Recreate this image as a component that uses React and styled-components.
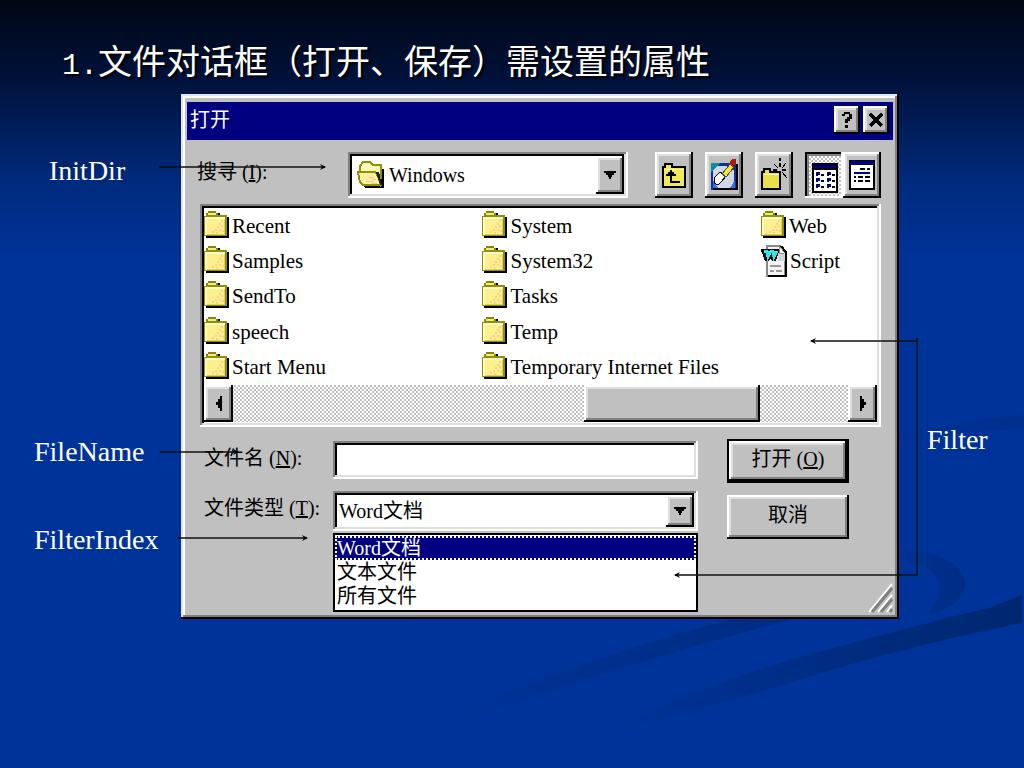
import styled, { createGlobalStyle, css } from "styled-components";

const GlobalStyle = createGlobalStyle`
  * {
    box-sizing: border-box;
  }
  body {
    margin: 0;
    background: #003399;
  }
`;

const uiFont = `"Liberation Serif", "Noto Sans CJK SC", serif`;

const raised = css`
  background: #c0c0c0;
  box-shadow: inset -2px -2px #000, inset 2px 2px #fff, inset -4px -4px #808080,
    inset 4px 4px #dfdfdf;
`;

const sunken = css`
  background: #fff;
  box-shadow: inset -2px -2px #fff, inset 2px 2px #808080,
    inset -4px -4px #dfdfdf, inset 4px 4px #000;
`;

const checker = css`
  background: repeating-conic-gradient(#c0c0c0 0 25%, #fff 0 50%) 0 0 / 4px 4px;
`;

const Slide = styled.main`
  position: relative;
  min-height: 100vh;
  overflow: hidden;
  background: linear-gradient(#000614 0, #00123a 80px, #002a7c 180px, #003399 260px);
`;

const Backdrop = styled.svg`
  position: absolute;
  right: 0;
  top: 0;
`;

const Arrows = styled.svg`
  position: absolute;
  left: 0;
  top: 0;
  pointer-events: none;
`;

const Title = styled.h1`
  position: relative;
  margin: 0;
  padding: 41px 0 4px 62px;
  color: #fff;
  font: 400 34px/48px "Liberation Mono", "Noto Sans CJK SC", sans-serif;
  text-shadow: 2px 2px 2px #000;
  white-space: nowrap;
  .t-number {
    font-size: 30px;
  }
`;

const Board = styled.div`
  position: relative;
  display: grid;
  grid-template-columns: 181px minmax(0, 1fr) 125px;
  align-items: start;
`;

const Notes = styled.div`
  display: flex;
  flex-direction: column;
  padding: ${(props) => props.$pad};
  color: #fff;
  font: 28px/32px "Liberation Serif", serif;
`;

const Note = styled.p`
  margin: 0;
  padding: ${(props) => props.$pad || "0"};
`;

const Dialog = styled.section`
  padding: 8px 6px 6px;
  background: #c0c0c0;
  box-shadow: inset -2px -2px #000, inset 2px 2px #dfe6f4,
    inset -4px -4px #808080, inset 4px 4px #fff;
  color: #000;
  font: 400 20px/24px ${uiFont};
`;

const TitleBar = styled.header`
  display: flex;
  align-items: center;
  gap: 3px;
  padding: 4px 4px 6px 3px;
  background: #000080;
  color: #fff;
  h2 {
    flex: 1;
    margin: 0;
    font: inherit;
  }
`;

const CaptionButton = styled.button`
  ${raised}
  display: flex;
  align-items: center;
  justify-content: center;
  width: 26px;
  height: 28px;
  padding: 0;
  border: 0;
`;

const LookRow = styled.div`
  display: flex;
  align-items: center;
  padding: 12px 12px 6px 10px;
  label {
    width: 151px;
    padding-bottom: 6px;
  }
`;

const Combo = styled.div`
  ${sunken}
  display: flex;
  flex: ${(props) => (props.$stacked ? "none" : "1")};
  align-items: center;
  min-width: 0;
  height: ${(props) => props.$height};
  padding: 4px 4px 4px ${(props) => props.$indent};
  svg + select {
    margin-left: 4px;
  }
  select {
    flex: 1;
    min-width: 0;
    padding: 0;
    border: 0;
    outline: 0;
    appearance: none;
    background: transparent;
    color: #000;
    font: inherit;
  }
`;

const DropButton = styled.button`
  ${raised}
  display: flex;
  align-items: center;
  justify-content: center;
  align-self: stretch;
  width: 28px;
  padding: 0;
  border: 0;
`;

const Tools = styled.div`
  display: flex;
  gap: 12px;
  margin-left: 27px;
`;

const ToolGroup = styled.div`
  display: flex;
`;

const ToolButton = styled.button`
  ${raised}
  display: flex;
  align-items: center;
  justify-content: center;
  width: 38px;
  height: 46px;
  padding: 0;
  border: 0;
  ${(props) =>
    props.$pressed &&
    css`
      ${checker}
      padding: 6px 0 0 2px;
      box-shadow: inset -2px -2px #fff, inset 2px 2px #000,
        inset 4px 4px #808080;
    `}
`;

const FilePane = styled.div`
  ${sunken}
  margin: 0 12px 0 13px;
  padding: 4px 4px 5px;
`;

const FileList = styled.ul`
  display: grid;
  grid-auto-flow: column;
  grid-template-rows: repeat(5, 1fr);
  grid-template-columns: 12fr 12fr 5fr;
  height: 177px;
  margin: 0;
  padding: 0;
  list-style: none;
`;

const FileItem = styled.li`
  display: flex;
  align-items: center;
  gap: 3px;
  min-width: 0;
  font-size: 21px;
  white-space: nowrap;
`;

const ScrollBar = styled.div`
  ${checker}
  display: flex;
  height: 37px;
`;

const ScrollButton = styled.button`
  ${raised}
  display: flex;
  align-items: center;
  justify-content: center;
  width: 29px;
  padding: 0;
  border: 0;
`;

const Track = styled.div`
  display: grid;
  flex: 1;
  grid-template-columns: 4fr 2fr 1fr;
`;

const Thumb = styled.div`
  ${raised}
  grid-column: 2;
`;

const Form = styled.div`
  display: grid;
  grid-template-columns: minmax(0, 1fr) 122px 44px;
  padding: 12px 0 0 17px;
`;

const Fields = styled.div`
  display: grid;
  grid-template-columns: 129px minmax(0, 1fr);
  align-items: start;
  row-gap: 12px;
  margin-right: 29px;
  padding: 2px 0 1px;
  label {
    padding-top: 5px;
  }
`;

const FileInput = styled.input`
  ${sunken}
  width: 100%;
  height: 38px;
  padding: 4px 8px;
  border: 0;
  border-radius: 0;
  outline: 0;
  font: inherit;
`;

const TypeField = styled.div`
  display: flex;
  flex-direction: column;
  gap: 2px;
`;

const Options = styled.ul`
  margin: 0;
  padding: 1px 0 2px;
  border: 2px solid #000;
  background: #fff;
  list-style: none;
`;

const Option = styled.li`
  padding-left: 2px;
  ${(props) =>
    props.$selected &&
    css`
      background: #000080;
      color: #fff;
      outline: 2px dotted #fff;
      outline-offset: -2px;
    `}
`;

const Actions = styled.div`
  display: flex;
  flex-direction: column;
  gap: 12px;
`;

const ActionButton = styled.button`
  ${raised}
  height: 44px;
  padding: 0 0 4px;
  border: 0;
  color: #000;
  font: inherit;
  ${(props) =>
    props.$primary &&
    css`
      border: 2px solid #000;
    `}
`;

const Grip = styled.svg`
  align-self: end;
  justify-self: end;
`;

const Folder = () => (
  <svg width="25" height="30" shapeRendering="crispEdges">
    <path d="M2 5v-3h2v-2h8v2h2v3z" fill="#f4ec80" />
    <path d="M2 5v-3h2v-2h8v2h2v2h-2v-2h-8v3z" fill="#868600" />
    <path d="M14 2h2v3h-2zM23 6h2v21h-23v-2h21z" fill="#000" />
    <path d="M0 5h2v-1h21v21h-23z" fill="#8f8f08" />
    <path d="M1 6h20v18h-20z" fill="#fbf08c" />
    <path d="M1 6h20v2h-18v16h-2z" fill="#fffbc8" />
    <path d="M20 8h1v16h-18v-1h17z" fill="#e0cc68" />
    <path
      d="M17 9h2v2h-2zM15 12h2v2h-2zM13 15h2v2h-2zM17 14h2v2h-2zM11 18h2v2h-2zM15 18h2v2h-2zM8 20h2v2h-2zM18 19h2v2h-2zM12 21h2v2h-2z"
      fill="#f8d090"
    />
  </svg>
);

const OpenFolder = () => (
  <svg width="28" height="28" shapeRendering="crispEdges">
    <path d="M6 25h17v-17h4v19h-19z" fill="#000" />
    <path d="M3 11v-6l3-4h7l3 3h8v9l-1 11z" fill="#fbf8b8" stroke="#8f8f08" strokeWidth="2" />
    <path d="M1 11h17l3 4 3 9h-18l-3-3z" fill="#fbf0a0" stroke="#8f8f08" strokeWidth="2" />
    <path d="M9 20h8M12 16h5M14 22h6M15 18h4" stroke="#f4c890" strokeWidth="1" />
    <path d="M19 11h3l3 13h-2z" fill="#222" />
  </svg>
);

const WordDoc = () => (
  <svg width="26" height="32" shapeRendering="crispEdges">
    <path d="M6 1h13l5 6v24h-18z" fill="#f4f4f4" stroke="#888" strokeWidth="2" />
    <path d="M20 1l5 6v24h-18" fill="none" stroke="#000" strokeWidth="2" />
    <path d="M17 8h7v8h-7z" fill="#d4d4d4" />
    <path d="M18 2v6h5" fill="#fff" stroke="#888" strokeWidth="1" />
    <path d="M9 21h11M9 26h4M15 26h6" stroke="#999" strokeWidth="2" />
    <path d="M0 4h18v3l-3 9h-4l-1-3-2 3h-4l-3-9h-1z" fill="#000" />
    <path d="M3 6h3l1 6 3-6h2l1 6 3-6" fill="none" stroke="#30e8e8" strokeWidth="3" />
  </svg>
);

const ParentFolder = () => (
  <svg width="26" height="28" shapeRendering="crispEdges">
    <path d="M2 26v-20h2v-3h7v3h13v20z" fill="#f0ea58" stroke="#000" strokeWidth="2" />
    <path d="M4 8h19" stroke="#fffbb0" strokeWidth="1" />
    <path d="M5 15h10v-2h-2v-2h-2v-2h-2v2h-2v2h-2zM9 15h2v5h8v2h-10z" fill="#000" />
  </svg>
);

const FindFiles = () => (
  <svg width="28" height="34" shapeRendering="crispEdges">
    <path d="M1 5h25v27h-25z" fill="#10309c" />
    <path d="M1 5h9l-9 9z" fill="#108c98" />
    <path d="M7 8h13l4 5v12l-5 5h-11l-5-5v-12z" fill="#d0d8e8" />
    <path d="M3 22l5 8h-5zM25 22l-5 8h5z" fill="#3070e8" />
    <path d="M3 31h24v-25" fill="none" stroke="#000" strokeWidth="2" />
    <path d="M4 20l6-6 6 4-5 6-3 3-4-2z" fill="#fff" stroke="#000" strokeWidth="1" />
    <path d="M12 16l8-10 4 3-8 10z" fill="#f4ec20" stroke="#444" strokeWidth="1" />
    <path d="M19 6l3-5h4v4l-3 4z" fill="#b01818" />
  </svg>
);

const NewFolder = () => (
  <svg width="28" height="34" shapeRendering="crispEdges">
    <path d="M2 31v-17h2v-3h6v3h10v17z" fill="#e8e048" stroke="#000" strokeWidth="2" />
    <path d="M4 16h15" stroke="#fffbb0" strokeWidth="1" />
    <path d="M20 0v3M20 5v4M20 15v5M13 12h4M22 12h4" stroke="#000" strokeWidth="2" />
    <path d="M14 6l4 4M26 5l-4 5M22 14l5 6" stroke="#000" strokeWidth="1" />
  </svg>
);

const ListView = () => (
  <svg width="26" height="30" shapeRendering="crispEdges">
    <path d="M1 1h24v28h-24z" fill="#fff" stroke="#000" strokeWidth="2" />
    <path d="M2 2h22v3h-22z" fill="#000080" />
    <path d="M0 5h26v2h-26z" fill="#000" />
    <path d="M4 9h4v3h-2v1h-2zM4 15h4v3h-2v1h-2zM4 21h4v3h-2v1h-2zM15 9h4v3h-2v1h-2zM15 15h4v3h-2v1h-2zM15 21h4v3h-2v1h-2z" fill="#000080" />
    <path d="M9 12h3M9 18h3M9 24h3M20 12h3M20 18h3M20 24h3" stroke="#000" strokeWidth="2" />
  </svg>
);

const DetailView = () => (
  <svg width="26" height="30" shapeRendering="crispEdges">
    <path d="M1 1h24v28h-24z" fill="#fff" stroke="#000" strokeWidth="2" />
    <path d="M1 1h24v4h-24z" fill="#000080" />
    <path d="M5 13h16" stroke="#000080" strokeWidth="2" />
    <path d="M11 9h5M18 9h3M5 17h2M9 17h5M16 17h5M5 21h2M9 21h5M16 21h5" stroke="#000" strokeWidth="2" />
  </svg>
);

const DownArrow = () => (
  <svg width="12" height="8" shapeRendering="crispEdges">
    <path d="M0 0h12v2h-2v2h-2v2h-1v2h-2v-2h-1v-2h-2v-2h-2z" />
  </svg>
);

const SideArrow = ({ right }) => (
  <svg width="8" height="16" shapeRendering="crispEdges">
    <path d={right ? "M1 0h2v3h2v3h2v3h-2v3h-2v3h-2z" : "M7 0h-2v3h-2v3h-2v3h2v3h2v3h2z"} />
  </svg>
);

const files = [
  "Recent", "Samples", "SendTo", "speech", "Start Menu",
  "System", "System32", "Tasks", "Temp", "Temporary Internet Files",
  "Web", "Script",
];

const types = ["Word文档", "文本文件", "所有文件"];

const App = () => {
  return (
    <Slide>
      <GlobalStyle />
      <Backdrop width="1024" height="768" aria-hidden="true">
        <defs>
          <linearGradient id="fade">
            <stop offset="0" stopColor="#002566" stopOpacity="0" />
            <stop offset="1" stopColor="#002568" stopOpacity="0.85" />
          </linearGradient>
          <linearGradient id="faint">
            <stop offset="0" stopColor="#002566" stopOpacity="0" />
            <stop offset="1" stopColor="#002568" stopOpacity="0.5" />
          </linearGradient>
        </defs>
        <path d="M607 733Q700 684 818 652T989 608L1022 595V623Q900 648 798 680T607 733z" fill="url(#fade)" />
        <path d="M440 722Q560 665 739 617H800Q660 655 560 688T440 722z" fill="url(#faint)" />
        <path d="M890 549Q955 550 965 580Q968 605 925 616Q950 590 932 572Q918 560 890 562z" fill="url(#faint)" />
        <path d="M860 445Q940 420 1024 415V428Q960 430 860 452z" fill="url(#faint)" opacity="0.5" />
      </Backdrop>

      <Title>
        <span className="t-number">1.</span>文件对话框（打开、保存）需设置的属性
      </Title>

      <Board>
        <Notes $pad="61px 0 0 34px">
          <Note $pad="0 0 249px 15px">InitDir</Note>
          <Note $pad="0 0 56px">FileName</Note>
          <Note>FilterIndex</Note>
        </Notes>

        <Dialog>
          <TitleBar>
            <h2>打开</h2>
            <CaptionButton aria-label="帮助">
              <svg width="12" height="18" shapeRendering="crispEdges">
                <path d="M1 5V3h2V1h6v2h2v5h-2v2h-2v2h-3v-4h2v-2h2V3H4v2zM4 14h3v3h-3z" />
              </svg>
            </CaptionButton>
            <CaptionButton aria-label="关闭">
              <svg width="14" height="14" shapeRendering="crispEdges">
                <path d="M1 1L13 13M13 1L1 13" stroke="#000" strokeWidth="3" />
              </svg>
            </CaptionButton>
          </TitleBar>

          <LookRow>
            <label htmlFor="look">
              搜寻 (<u>I</u>):
            </label>
            <Combo $height="46px" $indent="9px">
              <OpenFolder />
              <select id="look">
                <option>Windows</option>
              </select>
              <DropButton aria-label="展开">
                <DownArrow />
              </DropButton>
            </Combo>
            <Tools>
              <ToolButton aria-label="向上一级"><ParentFolder /></ToolButton>
              <ToolButton aria-label="搜索"><FindFiles /></ToolButton>
              <ToolButton aria-label="新建文件夹"><NewFolder /></ToolButton>
              <ToolGroup>
                <ToolButton $pressed aria-label="列表"><ListView /></ToolButton>
                <ToolButton aria-label="详细资料"><DetailView /></ToolButton>
              </ToolGroup>
            </Tools>
          </LookRow>

          <FilePane>
            <FileList>
              {files.map((name) => (
                <FileItem key={name}>
                  {name === "Script" ? <WordDoc /> : <Folder />}
                  {name}
                </FileItem>
              ))}
            </FileList>
            <ScrollBar>
              <ScrollButton aria-label="向左"><SideArrow /></ScrollButton>
              <Track>
                <Thumb />
              </Track>
              <ScrollButton aria-label="向右"><SideArrow right /></ScrollButton>
            </ScrollBar>
          </FilePane>

          <Form>
            <Fields>
              <label htmlFor="filename">
                文件名 (<u>N</u>):
              </label>
              <FileInput id="filename" type="text" />
              <label htmlFor="filetype">
                文件类型 (<u>T</u>):
              </label>
              <TypeField>
                <Combo $stacked $height="40px" $indent="6px">
                  <select id="filetype">
                    {types.map((type) => (
                      <option key={type}>{type}</option>
                    ))}
                  </select>
                  <DropButton aria-label="展开">
                    <DownArrow />
                  </DropButton>
                </Combo>
                <Options role="listbox" aria-label="文件类型">
                  {types.map((type, i) => (
                    <Option key={type} role="option" aria-selected={i === 0} $selected={i === 0}>
                      {type}
                    </Option>
                  ))}
                </Options>
              </TypeField>
            </Fields>
            <Actions>
              <ActionButton $primary>
                打开 (<u>O</u>)
              </ActionButton>
              <ActionButton>取消</ActionButton>
            </Actions>
            <Grip width="24" height="30" aria-hidden="true">
              <path d="M0 29L23 1M9 29L23 12M18 29L23 22" stroke="#fff" strokeWidth="2" />
              <path d="M3 29L23 5M12 29L23 16M21 29L23 26" stroke="#808080" strokeWidth="3" />
            </Grip>
          </Form>
        </Dialog>

        <Notes $pad="330px 0 0 28px">
          <Note>Filter</Note>
        </Notes>
      </Board>

      <Arrows width="1024" height="768" aria-hidden="true">
        <defs>
          <marker id="head" markerWidth="8" markerHeight="8" refX="6" refY="4" orient="auto" markerUnits="userSpaceOnUse">
            <path d="M1 1L7 4L1 7L3 4z" />
          </marker>
        </defs>
        <g fill="none" stroke="#111" strokeWidth="1.3">
          <path d="M159 167H325" markerEnd="url(#head)" />
          <path d="M160 452H238" markerEnd="url(#head)" />
          <path d="M177 538H307" markerEnd="url(#head)" />
          <path d="M917 341H811" markerEnd="url(#head)" />
          <path d="M917 338V575H675" markerEnd="url(#head)" />
        </g>
      </Arrows>
    </Slide>
  );
};

export default App;
